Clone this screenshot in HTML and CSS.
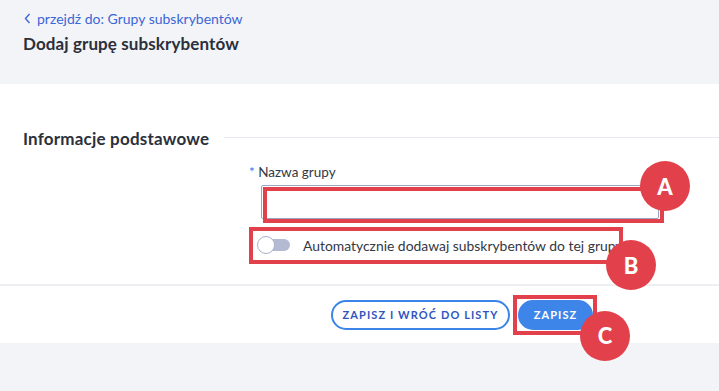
FILE: index.html
```html
<!DOCTYPE html>
<html lang="pl">
<head>
<meta charset="utf-8">
<link rel="stylesheet" href="styles.css">
</head>
<body>
<div class="page">
  <header class="header">
    <a class="back" href="#"><svg class="chev" width="7" height="11" viewBox="0 0 7 11"><path d="M5.5 1 L1.5 5.5 L5.5 10" fill="none" stroke="#3b66d6" stroke-width="1.4"/></svg>przejdź do: Grupy subskrybentów</a>
    <h1 class="title">Dodaj grupę subskrybentów</h1>
  </header>
  <main class="panel">
    <div class="section-head">
      <h2 class="section-title">Informacje podstawowe</h2>
      <div class="rule"></div>
    </div>
    <div class="form">
      <label class="label"><span class="req">*</span> Nazwa grupy</label>
      <div class="field">
        <input class="input" type="text">
        <div class="mark mark-a"></div>
        <div class="badge badge-a">A</div>
      </div>
      <div class="toggle-row">
        <span class="toggle"><span class="knob"></span></span>
        <span class="toggle-text">Automatycznie dodawaj subskrybentów do tej grupy</span>
        <div class="mark mark-b"></div>
        <div class="badge badge-b">B</div>
      </div>
    </div>
  </main>
  <footer class="footer">
    <button class="btn btn-outline">ZAPISZ I WRÓĆ DO LISTY</button>
    <div class="save-wrap">
      <button class="btn btn-primary">ZAPISZ</button>
      <div class="mark mark-c"></div>
      <div class="badge badge-c">C</div>
    </div>
  </footer>
</div>
</body>
</html>
```
FILE: styles.css
```css
* { box-sizing: border-box; }
html, body { margin: 0; padding: 0; }
body {
  background: #f3f4f8;
  font-family: "Lato", "Liberation Sans", sans-serif;
  color: #2b303b;
  width: 719px;
  height: 391px;
  overflow: hidden;
}
.header {
  height: 84px;
  padding: 10px 23px 0;
}
.back {
  display: flex;
  align-items: center;
  gap: 6px;
  font-size: 14px;
  color: #3b66d6;
  text-decoration: none;
  height: 16px;
  padding-left: 1px;
}
.chev { display: block; }
.title {
  margin: 7px 0 0;
  font-size: 17px;
  font-weight: 700;
  color: #2b303b;
  letter-spacing: 0.1px;
}
.panel {
  background: #fff;
  height: 200px;
  padding-top: 43px;
  position: relative;
}
.section-head {
  display: flex;
  align-items: center;
  padding-left: 23px;
  height: 22px;
}
.section-title {
  margin: 0;
  font-size: 17px;
  font-weight: 700;
  color: #2b303b;
  white-space: nowrap;
  letter-spacing: 0.2px;
}
.rule {
  flex: 1;
  height: 1px;
  background: #e8e9ee;
  margin-left: 15px;
  margin-top: -2px;
}
.form {
  padding-left: 249px;
  padding-top: 15px;
}
.label {
  display: block;
  font-size: 13.5px;
  color: #333844;
  height: 16px;
}
.req { color: #3b6fe0; }
.field {
  position: relative;
  margin-top: 5px;
  width: 402px;
  margin-left: 12px;
  height: 36px;
}
.input {
  display: block;
  width: 398px;
  height: 34px;
  border: 1px solid #9aa5c4;
  border-radius: 2px;
  background: #fff;
  margin: 0;
}
.mark {
  position: absolute;
  border: 4px solid #e2414b;
  pointer-events: none;
}
.mark-a { left: 2px; top: 2px; width: 401px; height: 36px; }
.badge {
  position: absolute;
  width: 50px;
  height: 50px;
  border-radius: 50%;
  background: #e2414b;
  color: #fff;
  font-family: "Lato", "Liberation Sans", sans-serif;
  font-weight: 900;
  font-size: 22px;
  display: flex;
  align-items: center;
  justify-content: center;
}
.badge-a { left: 379px; top: -24px; }
.toggle-row {
  position: relative;
  display: flex;
  align-items: center;
  height: 36px;
  margin-top: 6px;
  width: 374px;
  padding-left: 9px;
}
.toggle {
  position: relative;
  width: 32px;
  height: 12px;
  border-radius: 6px;
  background: #b3bad2;
  margin-right: 13px;
  flex: none;
}
.knob {
  position: absolute;
  left: -1px;
  top: -3px;
  width: 18px;
  height: 18px;
  border-radius: 50%;
  background: #fff;
  border: 1px solid #aab2cc;
}
.toggle-text {
  font-size: 13.9px;
  color: #333844;
  white-space: nowrap;
}
.mark-b { left: 0; top: 0; width: 374px; height: 37px; }
.badge-b { left: 357px; top: 13px; }
.footer {
  margin-top: 2px;
  background: #fff;
  height: 57px;
  box-shadow: 0 -2px 3px rgba(0,0,0,0.03);
  display: flex;
  align-items: center;
  padding-left: 331px;
  gap: 8px;
}
.btn {
  height: 30px;
  border-radius: 15px;
  font-family: "Lato", "Liberation Sans", sans-serif;
  font-size: 11px;
  font-weight: 700;
  letter-spacing: 1.1px;
  padding: 0;
  white-space: nowrap;
  cursor: pointer;
}
.btn-outline {
  width: 179px;
  background: #fff;
  border: 2px solid #3c84e8;
  color: #2f55c0;
}
.btn-primary {
  width: 75px;
  background: #3d85e8;
  border: none;
  color: #fff;
}
.save-wrap {
  position: relative;
}
.mark-c { left: -5px; top: -5px; width: 84px; height: 40px; }
.badge-c { left: 62px; top: 11px; }
```
